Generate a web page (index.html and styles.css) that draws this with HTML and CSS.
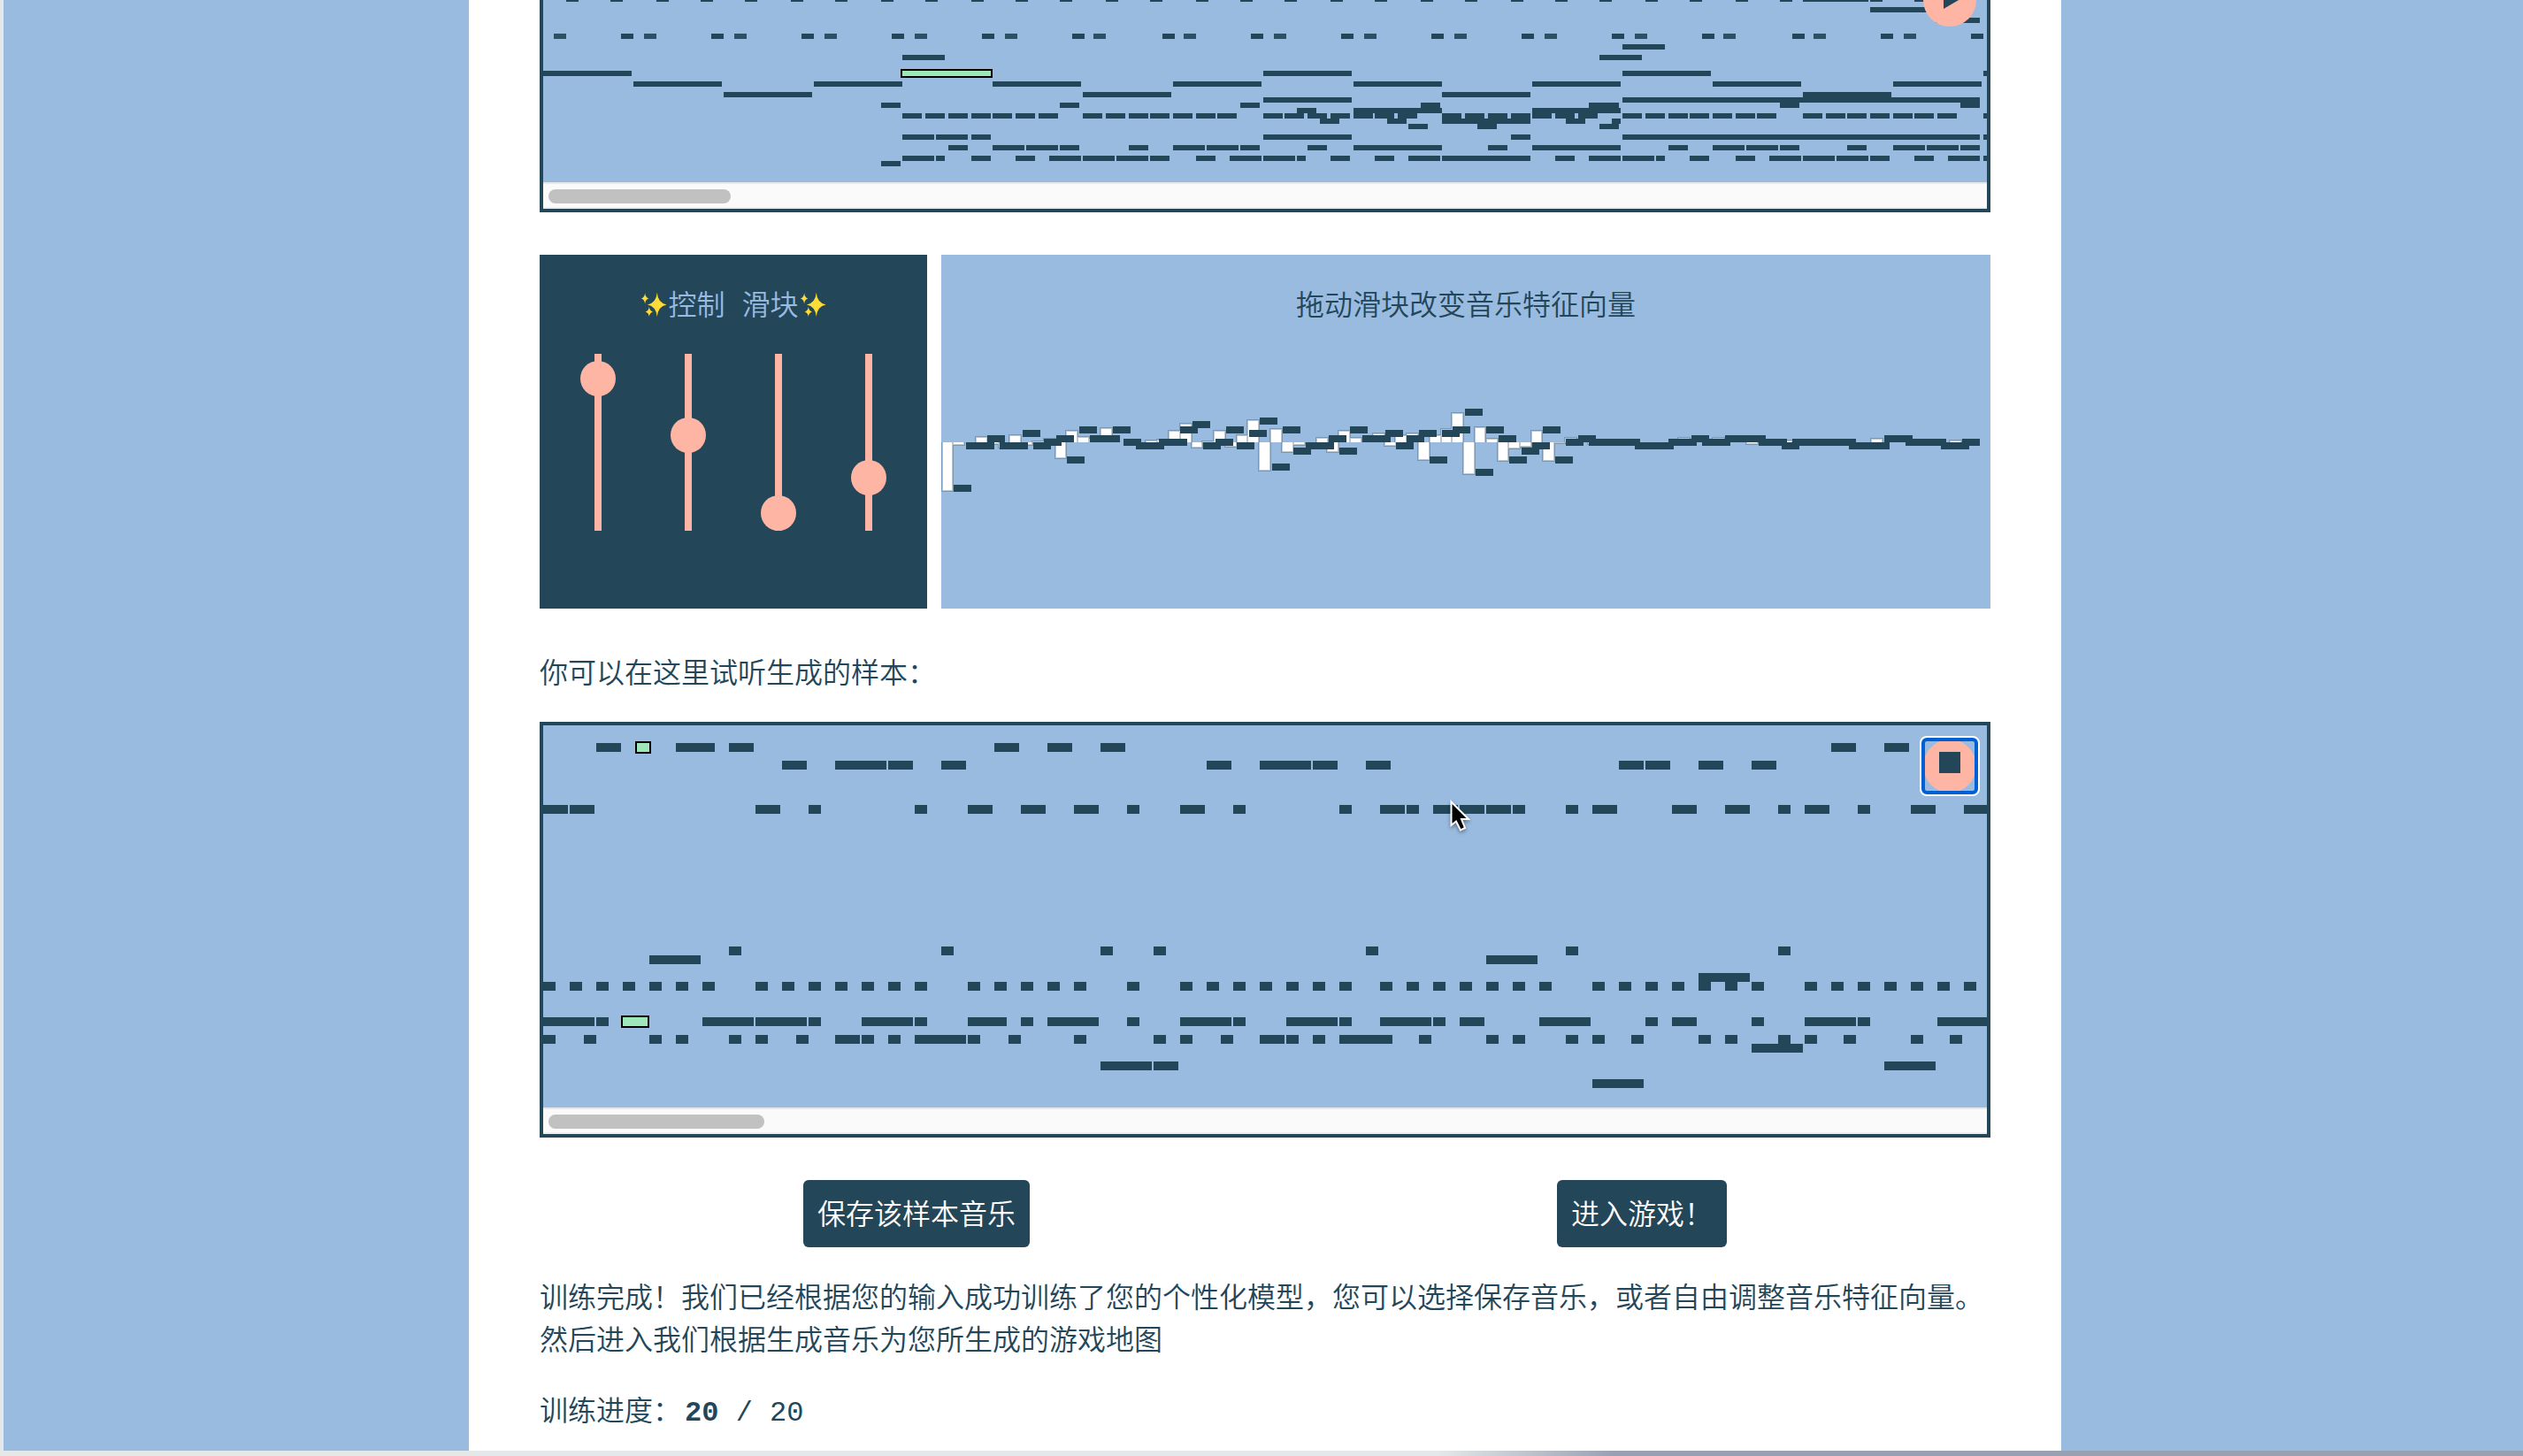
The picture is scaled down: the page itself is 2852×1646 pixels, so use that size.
FILE: index.html
```
<!DOCTYPE html>
<html lang="zh-CN">
<head>
<meta charset="utf-8">
<meta name="viewport" content="width=device-width, initial-scale=1">
<title>音乐样本训练</title>
<link rel="stylesheet" href="styles.css">
</head>
<body>
<svg class="defs" aria-hidden="true">
  <symbol id="sparkle" viewBox="-1 -1 34 34">
    <path d="M20 2Q21 14.500 31.500 16.500Q21 18.500 20 31Q19 18.500 8.500 16.500Q19 14.500 20 2Z"/>
    <path d="M5.500 2.500Q6 8 10 9Q6 10 5.500 15.500Q5 10 1 9Q5 8 5.500 2.500Z"/>
    <path d="M10.500 19Q11 24 15 25Q11 26 10.500 31Q10 26 6 25Q10 24 10.500 19Z"/>
  </symbol>
</svg>
<div class="page">
<main class="column">

  <section class="player player-source" aria-label="训练音乐">
    <svg class="roll roll-source" aria-hidden="true">
      <g class="notes notes-small">
        <path d="M26-1h14M76-1h14M128-1h14M178-1h14M228-1h14M280-1h14M330-1h14M382-1h14M432-1h14M484-1h14M534-1h14M584-1h14M636-1h14M686-1h14M738-1h14M788-1h14M838-1h14M890-1h14M940-1h14M992-1h14M1042-1h14M1094-1h14M1144-1h14M1194-1h14M1246-1h14M1296-1h14M1348-1h14M1398-1h14M1424-1h74M1500-1h14M1550-1h14"/>
        <path d="M1500 11h80M1574 23h50"/>
        <path d="M88 41h14M190 41h14M292 41h14M394 41h14M496 41h14M598 41h14M700 41h14M800 41h14M902 41h14M1004 41h14M1106 41h14M1208 41h14M1310 41h14M1412 41h14M1512 41h14M1614 41h14"/>
        <path class="soft" d="M12 41h14M114 41h14M216 41h14M318 41h14M420 41h14M522 41h14M622 41h14M724 41h14M826 41h14M928 41h14M1030 41h14M1132 41h14M1234 41h14M1334 41h14M1436 41h14M1538 41h14"/>
        <path d="M1220 53h48M406 65h48M1194 65h48"/>
        <path d="M0 83h100M814 83h100M1220 83h100M1628 83h10"/>
        <path d="M102 95h100M306 95h100M508 95h100M712 95h100M916 95h100M1118 95h100M1322 95h100M1526 95h100"/>
        <path d="M204 107h100M610 107h100M1016 107h100M1424 107h100"/>
        <path d="M814 113h100M1220 113h404"/>
        <path d="M382 119h22M584 119h22M788 119h22M992 119h22M1182 119h34M1398 119h22M1602 119h22"/>
        <path d="M852 125h22M916 125h100M1118 125h100"/>
        <path d="M406 131h22M432 131h22M458 131h22M484 131h22M508 131h22M534 131h22M560 131h22M610 131h22M636 131h22M662 131h22M686 131h22M712 131h22M738 131h22M762 131h22M814 131h22M838 131h22M864 131h22M890 131h22M916 131h22M940 131h22M966 131h22M1016 131h22M1042 131h22M1068 131h22M1094 131h22M1118 131h22M1144 131h22M1170 131h22M1220 131h22M1246 131h22M1272 131h22M1296 131h22M1322 131h22M1348 131h22M1372 131h22M1424 131h22M1450 131h22M1474 131h22M1500 131h22M1526 131h22M1550 131h22M1576 131h22M1628 131h22"/>
        <path d="M878 137h22M954 137h22M1016 137h100M1156 137h22M1208 137h10"/>
        <path d="M978 143h22M1056 143h22M1194 143h22"/>
        <path d="M406 155h36M444 155h36M484 155h22M814 155h100M1094 155h22M1220 155h404M1628 155h22"/>
        <path d="M458 167h22M508 167h36M546 167h36M584 167h22M662 167h22M712 167h36M750 167h36M788 167h22M864 167h22M916 167h100M1068 167h22M1118 167h100M1272 167h22M1322 167h36M1360 167h36M1398 167h22M1474 167h22M1526 167h36M1564 167h36M1602 167h22"/>
        <path d="M406 179h36M444 179h10M484 179h22M534 179h22M572 179h36M610 179h36M648 179h36M686 179h22M738 179h22M776 179h36M814 179h36M852 179h10M890 179h22M940 179h22M978 179h36M1016 179h100M1144 179h22M1182 179h36M1220 179h36M1258 179h10M1296 179h22M1348 179h22M1386 179h36M1424 179h36M1462 179h36M1500 179h22M1550 179h22M1588 179h36M1628 179h22"/>
        <path d="M382 185h22"/>
      </g>
      <rect class="playing" x="405" y="79" width="102" height="8"/>
    </svg>
    <div class="scrollbar"><div class="scroll-thumb scroll-thumb-source"></div></div>
    <button class="round-button round-button-source" type="button" aria-label="播放">
      <svg viewBox="0 0 60 60" aria-hidden="true"><circle class="disc" cx="30" cy="30" r="30"/><path class="glyph" d="M23 12L47 26L23 40Z"/></svg>
    </button>
  </section>

  <section class="mixer">
    <div class="controls">
      <h2 class="title title-light"><svg class="sparkle" aria-hidden="true"><use href="#sparkle"/></svg>控制 滑块<svg class="sparkle" aria-hidden="true"><use href="#sparkle"/></svg></h2>
      <div class="sliders">
        <label class="slider-cell"><input class="slider" type="range" min="0" max="100" value="95" aria-label="滑块一"></label>
        <label class="slider-cell"><input class="slider" type="range" min="0" max="100" value="55" aria-label="滑块二"></label>
        <label class="slider-cell"><input class="slider" type="range" min="0" max="100" value="0" aria-label="滑块三"></label>
        <label class="slider-cell"><input class="slider" type="range" min="0" max="100" value="25" aria-label="滑块四"></label>
      </div>
    </div>
    <div class="vector">
      <h2 class="title">拖动滑块改变音乐特征向量</h2>
      <svg class="chart" aria-hidden="true">
        <path class="bars" d="M1 60V115h12V60M13 60V63h13V60M39 60V54h13V60M52 60V62h13V60M65 60V66h12V60M77 60V52h13V60M90 60V63h13V60M103 60V59h13V60M116 60V56h13V60M129 60V78h12V60M141 60V47h13V60M154 60V54h13V60M167 60V56h13V60M180 60V44h13V60M231 60V58h13V60M244 60V57h13V60M257 60V47h13V60M270 60V39h13V60M283 60V66h12V60M295 60V59h13V60M308 60V47h13V60M321 60V65h13V60M334 60V52h12V60M346 60V35h13V60M359 60V92h13V60M372 60V45h13V60M385 60V71h13V60M398 60V63h13V60M424 60V55h13V60M436 60V71h13V60M449 60V47h13V60M462 60V55h13V60M488 60V50h13V60M501 60V64h13V60M513 60V52h13V60M526 60V50h13V60M539 60V80h13V60M552 60V52h13V60M565 60V45h12V60M577 60V27h13V60M590 60V96h13V60M603 60V43h12V60M616 60V56h13V60M629 60V81h12V60M641 60V67h13V60M654 60V65h13V60M667 60V47h12V60M680 60V81h13V60M693 60V61h12V60M705 60V55h13V60M731 60V62h13V60M833 60V55h13V60M872 60V55h13V60M910 60V62h13V60M949 60V58h13V60M1051 60V56h13V60M1140 60V58h13V60"/>
        <path class="notes notes-mid" d="M14 112h20M28 64h32M52 56h20M66 64h32M92 50h20M104 64h20M116 60h20M130 56h20M142 80h20M156 46h20M168 56h34M194 46h20M206 60h20M220 64h32M246 60h32M270 46h20M284 40h20M296 64h20M310 60h20M322 46h20M334 64h20M348 50h20M360 36h20M374 88h20M386 46h20M398 70h20M412 64h32M438 56h20M450 70h20M462 46h20M476 56h32M502 50h20M514 64h20M526 56h20M540 50h20M552 80h20M566 50h20M578 46h20M592 26h20M604 94h20M616 46h20M630 56h20M642 80h20M656 70h20M668 64h20M680 46h20M694 80h20M706 60h20M720 56h20M732 60h58M784 64h44M822 60h32M848 56h20M860 60h32M886 56h46M924 60h32M950 64h20M962 60h72M1026 64h46M1066 56h32M1090 60h46M1130 64h32M1154 60h20"/>
      </svg>
    </div>
  </section>

  <p class="text text-label">你可以在这里试听生成的样本：</p>

  <section class="player" aria-label="生成的样本">
    <svg class="roll roll-sample" aria-hidden="true">
      <g class="notes notes-large">
        <path d="M60 25h28M150 25h44M210 25h28M510 25h28M570 25h28M630 25h28M1456 25h28M1516 25h28"/>
        <path d="M270 45h28M330 45h58M390 45h28M450 45h28M750 45h28M810 45h58M870 45h28M930 45h28M1216 45h28M1246 45h28M1306 45h28M1366 45h28"/>
        <path d="M0 95h28M30 95h28M240 95h28M300 95h14M420 95h14M480 95h28M540 95h28M600 95h28M660 95h14M720 95h28M780 95h14M900 95h14M946 95h28M976 95h14M1006 95h28M1036 95h28M1066 95h28M1096 95h14M1156 95h14M1186 95h28M1276 95h28M1336 95h28M1396 95h14M1426 95h28M1486 95h14M1546 95h28M1606 95h28"/>
        <path d="M210 255h14M450 255h14M630 255h14M690 255h14M930 255h14M1156 255h14M1396 255h14"/>
        <path d="M120 265h58M1066 265h58M1306 285h58"/>
        <path d="M0 295h14M30 295h14M60 295h14M90 295h14M120 295h14M150 295h14M180 295h14M240 295h14M270 295h14M300 295h14M330 295h14M360 295h14M390 295h14M420 295h14M480 295h14M510 295h14M540 295h14M570 295h14M600 295h14M660 295h14M720 295h14M750 295h14M780 295h14M810 295h14M840 295h14M870 295h14M900 295h14M946 295h14M976 295h14M1006 295h14M1036 295h14M1066 295h14M1096 295h14M1126 295h14M1186 295h14M1216 295h14M1246 295h14M1276 295h14M1306 295h14M1336 295h14M1366 295h14M1426 295h14M1456 295h14M1486 295h14M1516 295h14M1546 295h14M1576 295h14M1606 295h14"/>
        <path d="M0 335h58M60 335h14M180 335h58M240 335h58M300 335h14M360 335h58M420 335h14M480 335h44M540 335h14M570 335h58M660 335h14M720 335h58M780 335h14M840 335h58M900 335h14M946 335h58M1006 335h14M1036 335h28M1126 335h58M1246 335h14M1276 335h28M1366 335h14M1426 335h58M1486 335h14M1576 335h58"/>
        <path d="M0 355h14M46 355h14M120 355h14M150 355h14M210 355h14M240 355h14M286 355h14M330 355h28M360 355h14M390 355h14M420 355h58M480 355h14M526 355h14M600 355h14M690 355h14M720 355h14M766 355h14M810 355h28M840 355h14M870 355h14M900 355h60M990 355h14M1066 355h14M1096 355h14M1156 355h14M1186 355h14M1230 355h14M1306 355h14M1336 355h14M1396 355h14M1426 355h14M1470 355h14M1546 355h14M1590 355h14"/>
        <path d="M1366 365h58M630 385h58M690 385h28M1516 385h58M1186 405h58"/>
      </g>
      <rect class="playing" x="105" y="19" width="16" height="12"/>
      <rect class="playing" x="89" y="329" width="30" height="12"/>
    </svg>
    <div class="scrollbar"><div class="scroll-thumb scroll-thumb-sample"></div></div>
    <button class="round-button round-button-focused" type="button" aria-label="停止">
      <svg viewBox="0 0 60 60" aria-hidden="true"><circle class="disc" cx="30" cy="30" r="30"/><path class="glyph" d="M18 14h24v24h-24Z"/></svg>
    </button>
    <svg class="pointer" viewBox="0 0 24 38" aria-hidden="true"><path d="M1.500 2.500V29L7 24.500L12 34.500L17 32L13 22H21Z"/></svg>
  </section>

  <div class="actions">
    <button class="action" type="button">保存该样本音乐</button>
    <button class="action" type="button">进入游戏！</button>
  </div>

  <p class="text text-status">训练完成！我们已经根据您的输入成功训练了您的个性化模型，您可以选择保存音乐，或者自由调整音乐特征向量。<br>然后进入我们根据生成音乐为您所生成的游戏地图</p>
  <p class="text">训练进度：<b class="step">20</b> / 20</p>

</main>
</div>
</body>
</html>
```
FILE: styles.css
```
:root {
  --navy: #234659;
  --sky: #9abbe0;
  --peach: #ffb5a3;
  --mint: #9ee7b8;
}

* {
  box-sizing: border-box;
}

body {
  margin: 0;
  background: var(--sky);
  color: var(--navy);
  font-family: "Liberation Mono", "Noto Sans CJK SC", monospace;
  font-size: 32px;
  font-weight: 350;
  line-height: 48px;
}

.defs {
  position: absolute;
  width: 0;
  height: 0;
}

.page {
  display: flex;
  justify-content: center;
  min-height: 100vh;
  padding-left: 4px;
  border-left: 4px solid #e4e8e9;
  border-bottom: 6px solid;
  border-image: linear-gradient(90deg, #e4e8e9 57%, #98a1b2 64%) 0 0 6 4;
}

.column {
  width: 100%;
  max-width: 1800px;
  padding: 0 80px 16px;
  background: #fff;
}

.player {
  position: relative;
  overflow: hidden;
  border: 4px solid var(--navy);
  background: var(--sky);
}

.player-source {
  border-top: 0;
}

.roll {
  display: block;
  width: 100%;
}

.roll-source {
  height: 206px;
}

.roll-sample {
  height: 432px;
}

.notes {
  fill: none;
  stroke: var(--navy);
}

.notes-small {
  stroke-width: 6px;
}

.notes-mid {
  stroke-width: 8px;
}

.notes-large {
  stroke-width: 10px;
}

.soft {
  opacity: 0.92;
}

.playing {
  fill: var(--mint);
  stroke: #000;
  stroke-width: 2px;
}

.scrollbar {
  height: 30px;
  padding: 6px;
  border-top: 2px solid #e8e8e8;
  border-bottom: 2px solid #ededed;
  background: #fafafa;
}

.scroll-thumb {
  height: 16px;
  border-radius: 8px;
  background: #c1c1c1;
}

.scroll-thumb-source {
  width: 206px;
}

.scroll-thumb-sample {
  width: 244px;
}

.round-button {
  position: absolute;
  top: 16px;
  right: 12px;
  width: 60px;
  height: 60px;
  padding: 0;
  border: 0;
  border-radius: 4px;
  background: none;
}

.round-button svg {
  display: block;
}

.round-button-source {
  top: -30px;
}

.round-button-focused {
  outline: 4px solid #0060d3;
  outline-offset: -2px;
  box-shadow: 0 0 0 4px #fff;
  background: var(--sky);
}

.disc {
  fill: var(--peach);
}

.glyph {
  fill: var(--navy);
}

.pointer {
  position: absolute;
  top: 84px;
  left: 1025px;
  width: 24px;
  height: 38px;
  fill: #000;
  stroke: #fff;
  stroke-width: 2px;
  filter: drop-shadow(0 2px 2px rgba(0, 0, 0, 0.4));
}

.mixer {
  display: grid;
  grid-template-columns: 438px 1fr;
  gap: 16px;
  margin-top: 48px;
}

.controls,
.vector {
  min-height: 400px;
  overflow: hidden;
}

.controls {
  padding: 36px 15px;
  background: var(--navy);
}

.vector {
  padding: 36px 0;
  background: var(--sky);
}

.title {
  display: flex;
  justify-content: center;
  align-items: flex-start;
  margin: 0;
  font-size: 32px;
  font-weight: 350;
  line-height: 48px;
}

.title-light {
  color: var(--sky);
}

.sparkle {
  width: 32px;
  height: 32px;
  margin-top: 4px;
  fill: #ffdc35;
}

.sliders {
  display: grid;
  grid-template-columns: repeat(4, 1fr);
  margin-top: 28px;
}

.slider-cell {
  display: flex;
  justify-content: center;
}

.slider {
  appearance: none;
  width: 40px;
  height: 200px;
  margin: 0;
  background: linear-gradient(var(--peach), var(--peach)) center / 8px 100% no-repeat;
  writing-mode: vertical-lr;
  direction: rtl;
}

.slider::-webkit-slider-thumb {
  appearance: none;
  width: 40px;
  height: 40px;
  border-radius: 50%;
  background: var(--peach);
}

.chart {
  display: block;
  width: 100%;
  height: 130px;
  margin-top: 68px;
}

.bars {
  fill: #fff;
  stroke: rgba(35, 70, 89, 0.3);
  stroke-width: 2px;
}

.text {
  margin: 32px 0 0;
}

.text-label {
  margin: 52px 0 28px;
}

.text-status {
  margin-top: 36px;
}

.step {
  margin-left: 4px;
  font-weight: 700;
}

.actions {
  display: flex;
  justify-content: space-around;
  margin-top: 48px;
}

.action {
  padding: 18px 16px 10px;
  border: 0;
  border-radius: 6px;
  background: var(--navy);
  color: #fff;
  font: inherit;
}
```
